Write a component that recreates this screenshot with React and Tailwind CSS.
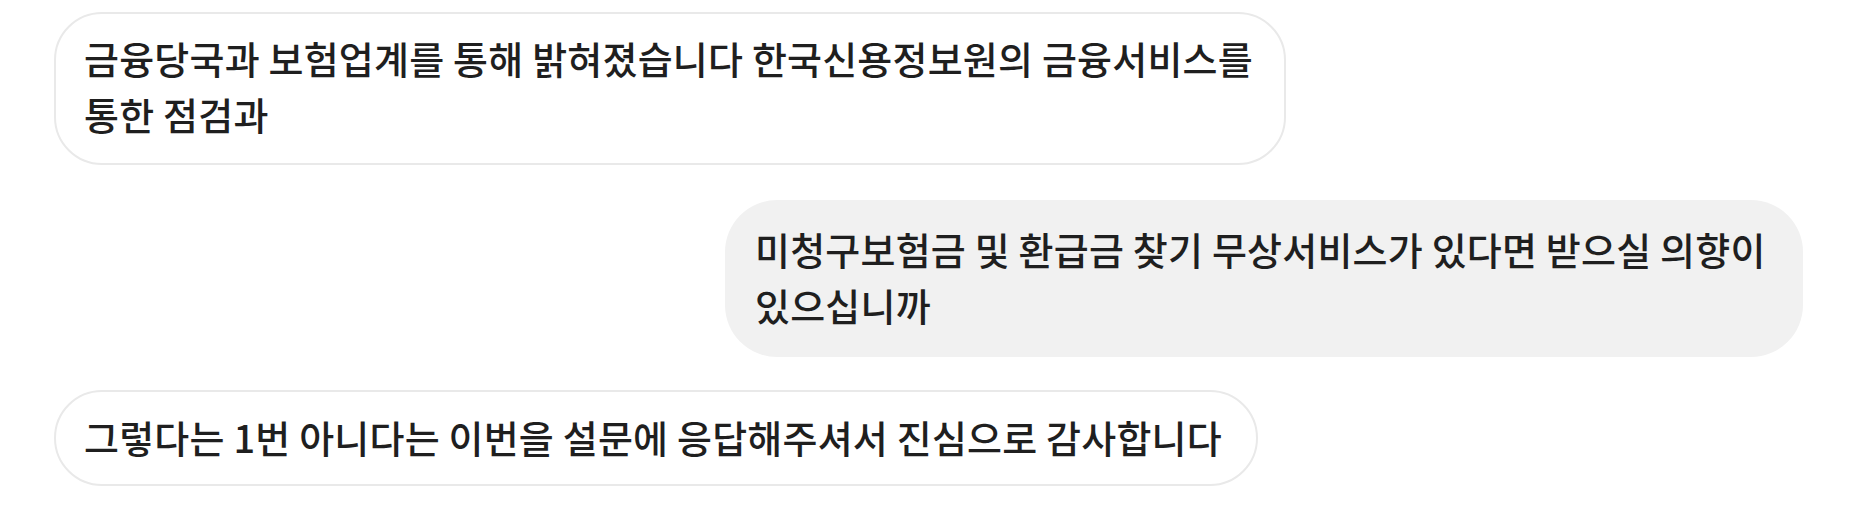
import React from "react";

const font = { fontFamily: '"Noto Sans CJK KR", "Noto Sans", sans-serif' };

const text =
  "text-[38px] leading-[56px] font-medium text-[#1f1f1f] tracking-[0.2px] whitespace-nowrap";

export default function App() {
  return (
    <div className="w-[1856px] h-[527px] bg-white" style={font}>
      <div className="flex flex-col pt-[12px] pl-[54px] pr-[53px]">
        <div className={`self-start w-[1232px] rounded-[48px] bg-white border-2 border-[#e9e9e9] pl-[28px] pr-[34px] pt-[16px] pb-[21px] ${text}`}>
          금융당국과 보험업계를 통해 밝혀졌습니다 한국신용정보원의 금융서비스를
          <br />
          통한 점검과
        </div>
        <div className={`self-end w-[1078px] mt-[35px] rounded-[52px] bg-[#f1f1f1] pl-[30px] pr-[36px] pt-[21px] pb-[24px] ${text}`}>
          미청구보험금 및 환급금 찾기 무상서비스가 있다면 받으실 의향이
          <br />
          있으십니까
        </div>
        <div className={`self-start w-[1204px] mt-[33px] rounded-[48px] bg-white border-2 border-[#e9e9e9] pl-[28px] pr-[34px] pt-[17px] pb-[19px] ${text}`}>
          그렇다는 1번 아니다는 이번을 설문에 응답해주셔서 진심으로 감사합니다
        </div>
      </div>
    </div>
  );
}
